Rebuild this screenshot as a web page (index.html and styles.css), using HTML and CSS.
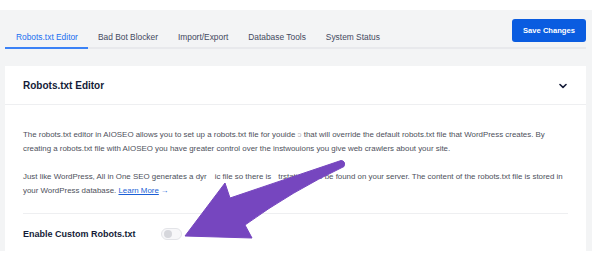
FILE: index.html
```html
<!DOCTYPE html>
<html>
<head>
<meta charset="utf-8">
<link rel="stylesheet" href="styles.css">
</head>
<body>
<div class="page">
  <div class="topbar">
    <nav class="tabs">
      <a class="tab active">Robots.txt Editor</a>
      <a class="tab">Bad Bot Blocker</a>
      <a class="tab">Import/Export</a>
      <a class="tab">Database Tools</a>
      <a class="tab">System Status</a>
    </nav>
    <button class="save">Save Changes</button>
  </div>

  <section class="card">
    <header class="card-head">
      <h2 class="card-title">Robots.txt Editor</h2>
      <svg class="chev" width="8" height="6" viewBox="0 0 8 6"><path d="M1 1.5 L4 4.3 L7 1.5" fill="none" stroke="#141b38" stroke-width="1.6" stroke-linecap="round" stroke-linejoin="round"/></svg>
    </header>
    <div class="card-body">
      <p class="desc">The robots.txt editor in AIOSEO allows you to set up a robots.txt file for youide <span class="faint">ɔ</span> that will override the default robots.txt file that WordPress creates. By<br>creating a robots.txt file with AIOSEO you have greater control over the instwouions you give web crawlers about your site.</p>
      <p class="desc">Just like WordPress, All in One SEO generates a dyr<span class="gap g1"></span>ic file so there is<span class="gap g2"></span>trstatic file to be found on your server. The content of the robots.txt file is stored in<br>your WordPress database. <a class="learn">Learn More</a> <span class="arr">→</span></p>
      <div class="divider"></div>
      <div class="setting">
        <div class="setting-label">Enable Custom Robots.txt</div>
        <div class="toggle"><span class="knob"></span></div>
      </div>
    </div>
  </section>
</div>

<svg class="pointer" width="600" height="266" viewBox="0 0 600 266">
  <path d="M185 236 L225 183 L230 198 L341 160.5 Q346 161 344 166.5 Q292 191 245 225 L252 238 Z" fill="#7646bf" stroke="#7646bf" stroke-width="1" stroke-linejoin="round"/>
</svg>
</body>
</html>
```

FILE: styles.css
```css
* { box-sizing: border-box; }
html, body { margin: 0; padding: 0; background: #fff; }
body {
  font-family: "Liberation Sans", Arial, sans-serif;
  width: 600px;
  height: 266px;
  overflow: hidden;
  position: relative;
}
.page {
  margin-top: 10px;
  width: 592px;
  height: 241px;
  background: #f3f4f5;
  padding: 0 6px 0 5px;
  overflow: hidden;
}
.topbar {
  display: flex;
  justify-content: space-between;
  align-items: flex-start;
  height: 39px;
  border-bottom: 2px solid #e8e9ec;
}
.tabs {
  display: flex;
  align-self: stretch;
  align-items: flex-end;
}
.tab {
  display: block;
  font-size: 8.4px;
  line-height: 10px;
  color: #434960;
  padding: 0 10px 5px;
  margin-bottom: -2px;
  border-bottom: 2px solid transparent;
  white-space: nowrap;
}
.tab:first-child { padding-left: 11px; }
.tab.active {
  color: #1a6ff0;
  border-bottom-color: #3b82f6;
}
.save {
  margin-top: 9px;
  width: 74px;
  height: 23px;
  border: none;
  border-radius: 3px;
  background: #0a5ce0;
  color: #fff;
  font-family: inherit;
  font-weight: bold;
  font-size: 7.6px;
  padding: 0;
}
.card {
  margin-top: 17px;
  background: #fff;
  height: 200px;
}
.card-head {
  height: 39px;
  border-bottom: 1px solid #eeeff1;
  display: flex;
  align-items: center;
  justify-content: space-between;
  padding: 1px 19px 0 18px;
}
.card-title {
  margin: 0;
  font-size: 10px;
  font-weight: bold;
  color: #141b38;
}
.chev { display: block; }
.card-body {
  padding: 23px 18px 0 18px;
}
.desc {
  margin: 0 0 14px;
  font-size: 7.9px;
  line-height: 14px;
  color: #4d505b;
  white-space: nowrap;
}
.faint { color: #b9bbc3; }
.gap { display: inline-block; width: 9px; }
.g1 { width: 8px; }
.g2 { width: 7px; }
.learn {
  color: #1a5fd6;
  text-decoration: underline;
}
.arr { color: #1a5fd6; }
.divider {
  margin-top: 15px;
  height: 1px;
  background: #eeeff1;
}
.setting {
  display: flex;
  align-items: center;
  height: 40px;
}
.setting-label {
  width: 138px;
  font-size: 9px;
  font-weight: bold;
  color: #141b38;
}
.toggle {
  width: 21px;
  height: 12px;
  border-radius: 6px;
  border: 1px solid #e3e4e8;
  background: #f7f7f9;
  display: flex;
  align-items: center;
  padding-left: 2px;
}
.knob {
  width: 8px;
  height: 8px;
  border-radius: 50%;
  background: #d6d7dc;
}
.pointer {
  position: absolute;
  left: 0;
  top: 0;
  pointer-events: none;
}
```
